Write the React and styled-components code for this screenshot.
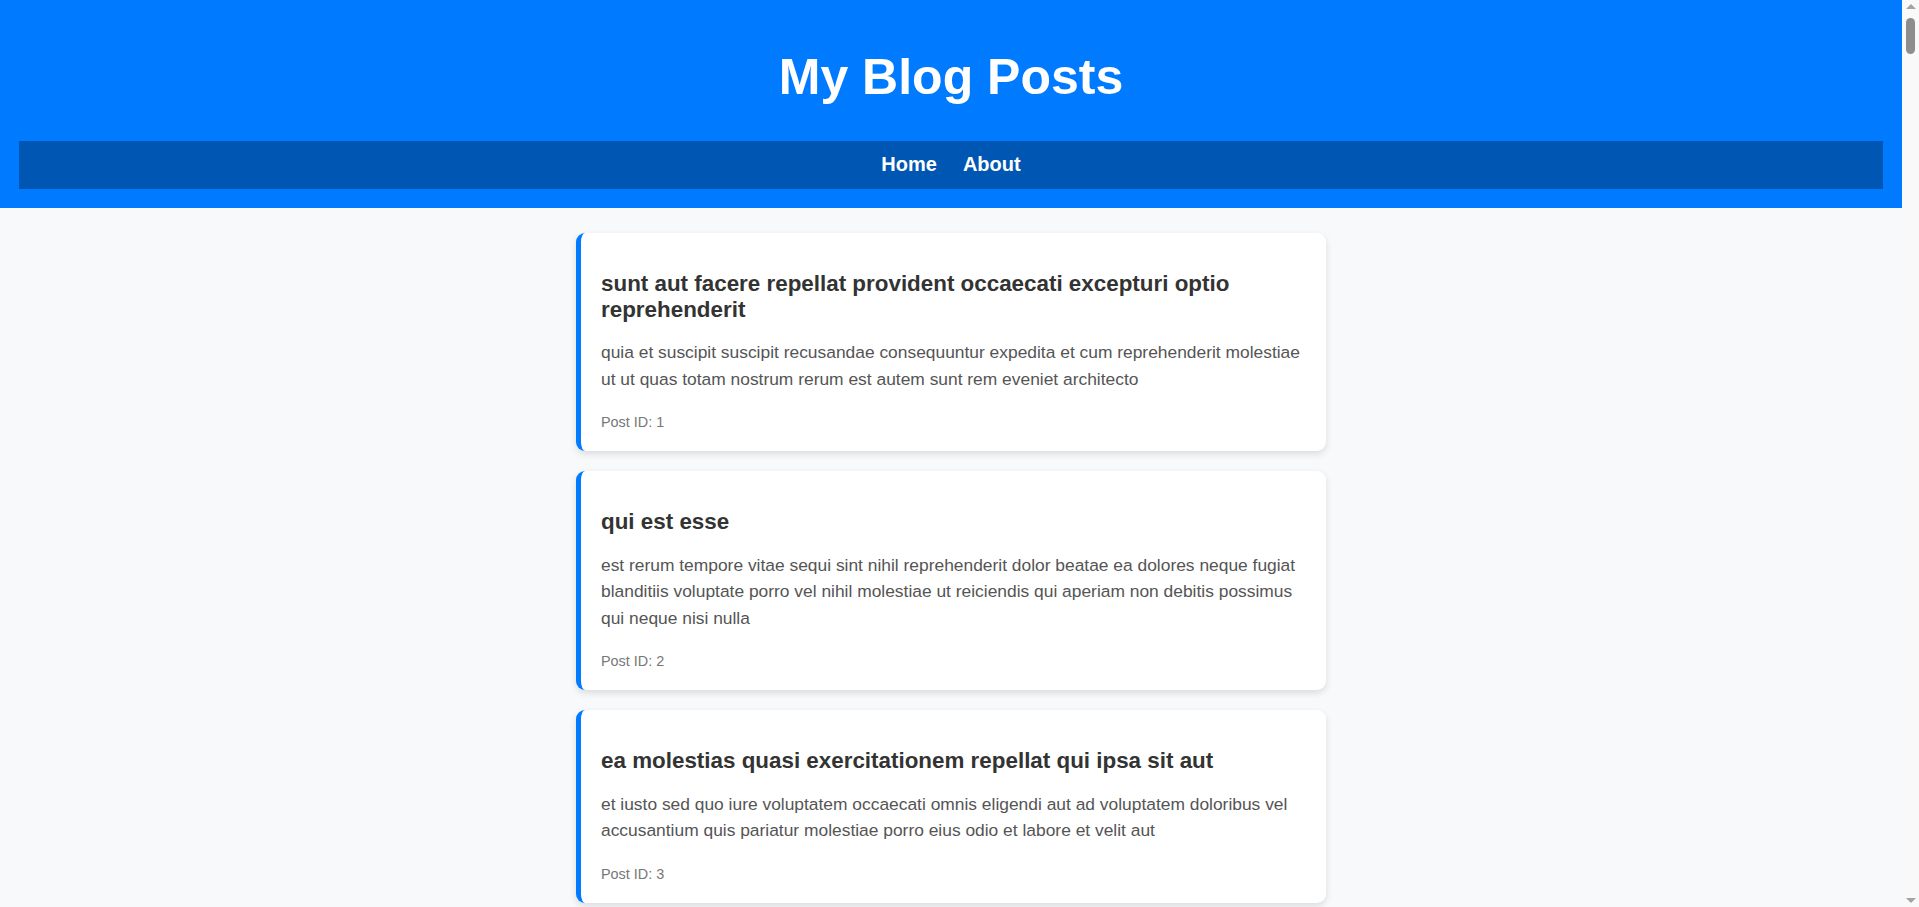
import React from "react";
import styled, { createGlobalStyle } from "styled-components";

const GlobalStyle = createGlobalStyle`
  html, body {
    margin: 0;
    padding: 0;
  }
  body {
    background: #f8f9fa;
    font-family: "Liberation Sans", Arial, Helvetica, sans-serif;
    color: #333;
    padding-right: 17px;
  }
`;

const ScrollRail = styled.div`
  position: fixed;
  top: 0;
  right: 0;
  width: 17px;
  height: 100vh;
  background: #f9f9f9;
  display: flex;
  flex-direction: column;
  align-items: center;
  justify-content: space-between;
  padding: 4px 0;
  box-sizing: border-box;
  z-index: 10;
`;

const RailTop = styled.div`
  display: flex;
  flex-direction: column;
  align-items: center;
  gap: 9px;
`;

const Arrow = styled.div`
  width: 0;
  height: 0;
  border-left: 5px solid transparent;
  border-right: 5px solid transparent;
  ${(p) =>
    p.$down
      ? "border-top: 5px solid #a3a3a3;"
      : "border-bottom: 5px solid #a3a3a3;"}
`;

const Thumb = styled.div`
  width: 9px;
  height: 36px;
  border-radius: 5px;
  background: #8d8d8d;
`;

const Header = styled.header`
  background: #007bff;
  padding: 19.2px;
  text-align: center;
`;

const Title = styled.h1`
  margin: 30px 0 35px;
  font-size: 50px;
  font-weight: 700;
  line-height: 57px;
  color: #ffffff;
`;

const Nav = styled.nav`
  background: #0056b3;
  padding: 11.5px 0 13px;
  display: flex;
  justify-content: center;
  gap: 26px;
`;

const NavLink = styled.a`
  color: #ffffff;
  font-size: 20px;
  font-weight: 700;
  line-height: normal;
  text-decoration: none;
  cursor: pointer;
`;

const Main = styled.main`
  max-width: 750px;
  margin: 0 auto;
  padding: 25px 0 20px;
`;

const Card = styled.article`
  background: #ffffff;
  border-left: 5px solid #007bff;
  border-radius: 9px;
  box-shadow: 0 3px 7px rgba(0, 0, 0, 0.12);
  padding: 20px 20px 21px 20px;
  margin-bottom: 20px;
`;

const PostTitle = styled.h2`
  margin: 18px 0 16.5px;
  font-size: 22.4px;
  font-weight: 700;
  line-height: normal;
  color: #333333;
`;

const PostBody = styled.p`
  margin: 0 0 22px;
  font-size: 17.4px;
  line-height: 26.5px;
  color: #555555;
`;

const PostMeta = styled.div`
  font-size: 14.4px;
  line-height: normal;
  color: #777777;
`;

const posts = [
  {
    id: 1,
    title: "sunt aut facere repellat provident occaecati excepturi optio reprehenderit",
    body: "quia et suscipit suscipit recusandae consequuntur expedita et cum reprehenderit molestiae ut ut quas totam nostrum rerum est autem sunt rem eveniet architecto",
  },
  {
    id: 2,
    title: "qui est esse",
    body: "est rerum tempore vitae sequi sint nihil reprehenderit dolor beatae ea dolores neque fugiat blanditiis voluptate porro vel nihil molestiae ut reiciendis qui aperiam non debitis possimus qui neque nisi nulla",
  },
  {
    id: 3,
    title: "ea molestias quasi exercitationem repellat qui ipsa sit aut",
    body: "et iusto sed quo iure voluptatem occaecati omnis eligendi aut ad voluptatem doloribus vel accusantium quis pariatur molestiae porro eius odio et labore et velit aut",
  },
  {
    id: 4,
    title: "eum et est occaecati",
    body: "ullam et saepe reiciendis voluptatem adipisci sit amet autem assumenda provident rerum culpa quis hic commodi nesciunt rem tenetur doloremque ipsam iure quis sunt voluptatem rerum illo velit",
  },
  {
    id: 5,
    title: "nesciunt quas odio",
    body: "repudiandae veniam quaerat sunt sed alias aut fugiat sit autem sed est voluptatem omnis possimus esse voluptatibus quis est aut tenetur dolor neque",
  },
];

export default function App() {
  return (
    <>
      <GlobalStyle />
      <Header>
        <Title>My Blog Posts</Title>
        <Nav>
          <NavLink href="#">Home</NavLink>
          <NavLink href="#">About</NavLink>
        </Nav>
      </Header>
      <Main>
        {posts.map((p) => (
          <Card key={p.id}>
            <PostTitle>{p.title}</PostTitle>
            <PostBody>{p.body}</PostBody>
            <PostMeta>Post ID: {p.id}</PostMeta>
          </Card>
        ))}
      </Main>
      <ScrollRail aria-hidden="true">
        <RailTop>
          <Arrow />
          <Thumb />
        </RailTop>
        <Arrow $down />
      </ScrollRail>
    </>
  );
}
